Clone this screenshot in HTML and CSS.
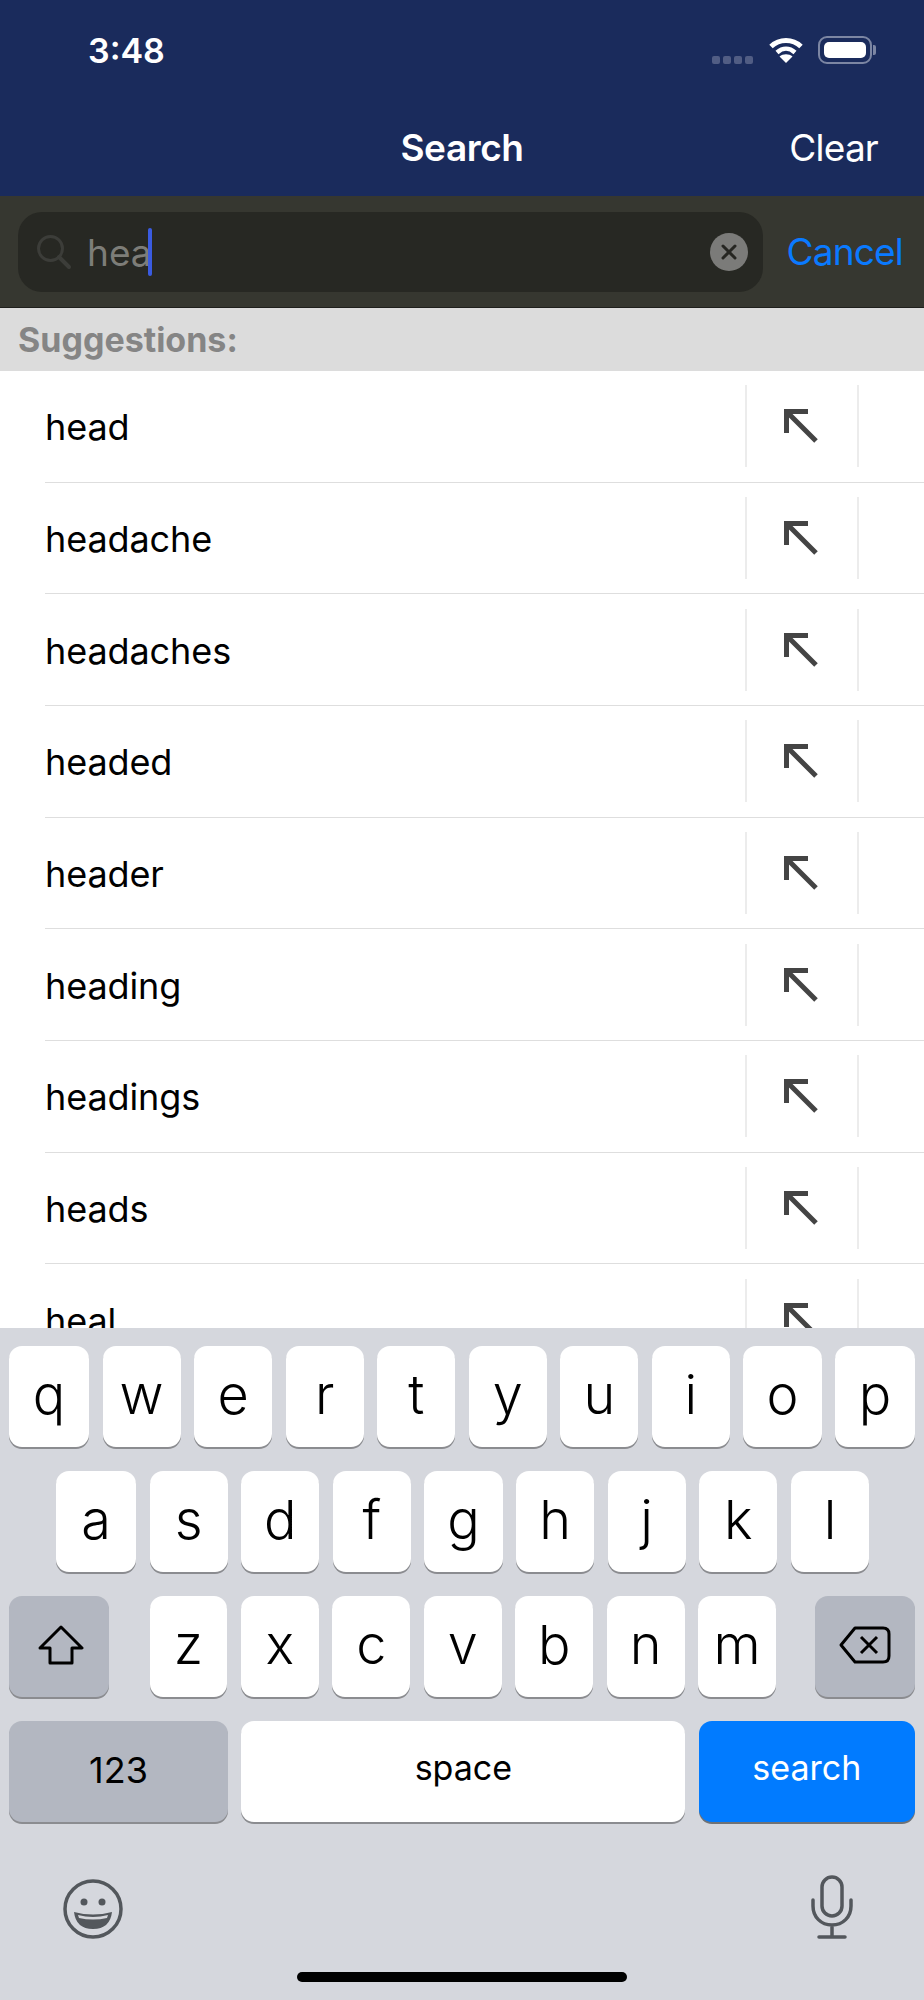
FILE: index.html
```html
<!DOCTYPE html>
<html lang="en">
<head>
  <meta charset="UTF-8" />
  <title>Search</title>
  <link rel="stylesheet" href="styles.css">
</head>
<body>
  <svg class="defs" width="0" height="0">
    <symbol id="fill-arrow" viewBox="0 0 34 34">
      <path d="M2.5 24V2.5H24M2.5 2.5L32 32" fill="none" stroke="#444" stroke-width="5"/>
    </symbol>
  </svg>

  <header class="top">
    <div class="status">
      <span class="time">3:48</span>
      <div class="status-icons">
        <div class="signal"><i></i><i></i><i></i><i></i></div>
        <svg class="wifi" width="36" height="26" viewBox="0 0 36 26">
          <path d="M3 9.500C11.500 1.500 24.500 1.500 33 9.500" fill="none" stroke="#fff" stroke-width="5"/>
          <path d="M9 15.500C14.500 10.500 21.500 10.500 27 15.500" fill="none" stroke="#fff" stroke-width="4.500"/>
          <path d="M18 26L11.500 19.500C15 16.500 21 16.500 24.500 19.500Z" fill="#fff"/>
        </svg>
        <div class="battery"><span class="battery-level"></span></div>
        <span class="battery-cap"></span>
      </div>
    </div>
    <nav class="nav">
      <span class="nav-title">Search</span>
      <span class="nav-clear">Clear</span>
    </nav>
  </header>

  <div class="search-bar">
    <div class="search-field">
      <svg class="search-icon" width="36" height="36" viewBox="0 0 36 36">
        <circle cx="14.500" cy="14.500" r="12" fill="none" stroke="#3c3d39" stroke-width="3"/>
        <path d="M23 23L33 33" stroke="#3c3d39" stroke-width="4" stroke-linecap="round"/>
      </svg>
      <span class="search-text">hea</span><span class="caret"></span>
      <svg class="search-clear" width="38" height="38" viewBox="0 0 38 38">
        <circle cx="19" cy="19" r="19" fill="#7b7b79"/>
        <path d="M13 13L25 25M25 13L13 25" stroke="#262622" stroke-width="3" stroke-linecap="round"/>
      </svg>
    </div>
    <span class="search-cancel">Cancel</span>
  </div>

  <div class="section-title">Suggestions:</div>

  <ul class="list">
    <li class="row"><span class="row-text">head</span><span class="row-action"><svg width="34" height="34"><use href="#fill-arrow"/></svg></span></li>
    <li class="row"><span class="row-text">headache</span><span class="row-action"><svg width="34" height="34"><use href="#fill-arrow"/></svg></span></li>
    <li class="row"><span class="row-text">headaches</span><span class="row-action"><svg width="34" height="34"><use href="#fill-arrow"/></svg></span></li>
    <li class="row"><span class="row-text">headed</span><span class="row-action"><svg width="34" height="34"><use href="#fill-arrow"/></svg></span></li>
    <li class="row"><span class="row-text">header</span><span class="row-action"><svg width="34" height="34"><use href="#fill-arrow"/></svg></span></li>
    <li class="row"><span class="row-text">heading</span><span class="row-action"><svg width="34" height="34"><use href="#fill-arrow"/></svg></span></li>
    <li class="row"><span class="row-text">headings</span><span class="row-action"><svg width="34" height="34"><use href="#fill-arrow"/></svg></span></li>
    <li class="row"><span class="row-text">heads</span><span class="row-action"><svg width="34" height="34"><use href="#fill-arrow"/></svg></span></li>
    <li class="row"><span class="row-text">heal</span><span class="row-action"><svg width="34" height="34"><use href="#fill-arrow"/></svg></span></li>
  </ul>

  <section class="keyboard">
    <div class="key-row key-row-top">
      <span class="key key-wide">q</span><span class="key">w</span><span class="key">e</span><span class="key">r</span><span class="key">t</span><span class="key">y</span><span class="key">u</span><span class="key">i</span><span class="key">o</span><span class="key key-wide">p</span>
    </div>
    <div class="key-row key-row-middle">
      <span class="key key-wide">a</span><span class="key">s</span><span class="key">d</span><span class="key">f</span><span class="key">g</span><span class="key">h</span><span class="key">j</span><span class="key">k</span><span class="key">l</span>
    </div>
    <div class="key-row">
      <span class="key key-fn key-shift">
        <svg width="46" height="40" viewBox="0 0 46 40">
          <path d="M23 2L44 23H34V38H12V23H2Z" fill="none" stroke="#000" stroke-width="3" stroke-linejoin="round"/>
        </svg>
      </span>
      <div class="key-group">
        <span class="key">z</span><span class="key">x</span><span class="key">c</span><span class="key">v</span><span class="key">b</span><span class="key">n</span><span class="key">m</span>
      </div>
      <span class="key key-fn key-delete">
        <svg width="52" height="38" viewBox="0 0 52 38">
          <path d="M16 2H44Q50 2 50 8V30Q50 36 44 36H16L2 19Z" fill="none" stroke="#000" stroke-width="3" stroke-linejoin="round"/>
          <path d="M22 11L38 27M38 11L22 27" stroke="#000" stroke-width="3"/>
        </svg>
      </span>
    </div>
    <div class="key-row key-row-bottom">
      <span class="key key-fn key-123">123</span>
      <span class="key key-space">space</span>
      <span class="key key-search">search</span>
    </div>
    <div class="key-extras">
      <svg class="emoji" width="60" height="60" viewBox="0 0 60 60">
        <circle cx="30" cy="30" r="28" fill="none" stroke="#53575c" stroke-width="3.500"/>
        <circle cx="21" cy="23" r="3.500" fill="#53575c"/>
        <circle cx="39" cy="23" r="3.500" fill="#53575c"/>
        <path d="M11 33Q30 38 49 33Q47 50 30 50Q13 50 11 33Z" fill="#53575c"/>
        <path d="M15 36Q30 40 45 36L44 39Q30 42 16 39Z" fill="#d6d7dc"/>
      </svg>
      <svg class="mic" width="42" height="64" viewBox="0 0 42 64">
        <rect x="11" y="2" width="20" height="39" rx="10" fill="none" stroke="#53575c" stroke-width="3.500"/>
        <path d="M2 25V31C2 42 10 50 21 50C32 50 40 42 40 31V25M21 50V61M8 62H34" fill="none" stroke="#53575c" stroke-width="3.500" stroke-linecap="round"/>
      </svg>
    </div>
    <div class="home-bar"></div>
  </section>
</body>
</html>
```

FILE: styles.css
```css
* {
  box-sizing: border-box;
}
body {
  margin: 0;
  width: 924px;
  height: 2000px;
  overflow: hidden;
  display: flex;
  flex-direction: column;
  font-family: Inter, "Noto Sans", sans-serif;
  background: #fff;
  color: #000;
}
.defs {
  position: absolute;
}

/* header */
.top {
  height: 196px;
  flex: none;
  background: #1a2b5c;
  color: #fff;
}
.status {
  height: 100px;
  padding: 0 48px 0 88px;
  display: flex;
  align-items: center;
  justify-content: space-between;
}
.time {
  font-size: 34px;
  font-weight: 600;
}
.status-icons {
  display: flex;
  align-items: center;
}
.signal {
  display: flex;
  gap: 3px;
  margin: 20px 15px 0 0;
}
.signal i {
  width: 8px;
  height: 8px;
  border-radius: 2px;
  background: #515d84;
}
.battery {
  width: 54px;
  height: 28px;
  margin-left: 14px;
  padding: 4px;
  border: 2px solid #7c86a3;
  border-radius: 9px;
}
.battery-level {
  display: block;
  height: 100%;
  background: #fff;
  border-radius: 5px;
}
.battery-cap {
  width: 3px;
  height: 10px;
  margin-left: 1px;
  background: #7c86a3;
  border-radius: 0 2px 2px 0;
}
.nav {
  position: relative;
  height: 96px;
  display: flex;
  align-items: center;
  justify-content: center;
  padding-bottom: 2px;
}
.nav-title {
  font-size: 37px;
  font-weight: 600;
  letter-spacing: -0.4px;
}
.nav-clear {
  position: absolute;
  right: 46px;
  font-size: 37px;
  letter-spacing: -0.8px;
}

/* search */
.search-bar {
  height: 112px;
  flex: none;
  background: #363730;
  border-bottom: 1px solid #1f1f1c;
  padding: 16px 21px 15px 18px;
  display: flex;
  align-items: center;
  justify-content: space-between;
}
.search-field {
  width: 745px;
  height: 80px;
  background: #272823;
  border-radius: 24px;
  padding: 0 15px 0 18px;
  display: flex;
  align-items: center;
}
.search-icon {
  flex: none;
  margin-right: 15px;
}
.search-text {
  font-size: 37px;
  color: #7d7d78;
}
.caret {
  width: 4px;
  height: 48px;
  margin-left: -4px;
  background: #3a5be0;
  border-radius: 2px;
}
.search-clear {
  margin-left: auto;
}
.search-cancel {
  font-size: 37px;
  letter-spacing: -0.8px;
  color: #0a7aff;
  padding-bottom: 2px;
}
.section-title {
  height: 63px;
  flex: none;
  padding: 0 18px;
  display: flex;
  align-items: center;
  background: #dcdcdc;
  color: #858585;
  font-size: 34px;
  font-weight: 700;
}

/* suggestions */
.list {
  flex: 1;
  min-height: 0;
  margin: 0;
  padding: 0;
  list-style: none;
  overflow: hidden;
}
.row {
  height: 111.67px;
  flex: none;
  margin-left: 45px;
  border-bottom: 1.500px solid #dedede;
  display: flex;
  align-items: center;
}
.row-text {
  flex: 1;
  padding-top: 2px;
  font-size: 36px;
  letter-spacing: -0.1px;
}
.row-action {
  width: 114px;
  height: 82px;
  margin-right: 65px;
  border-left: 2px solid #ececec;
  border-right: 2px solid #ececec;
  padding-right: 2px;
  display: flex;
  align-items: center;
  justify-content: center;
}

/* keyboard */
.keyboard {
  height: 672px;
  flex: none;
  position: relative;
  background: #d5d7dd;
  padding: 18px 9px 0;
  display: flex;
  flex-direction: column;
  gap: 24px;
}
.key-row {
  height: 101px;
  display: flex;
  gap: 13.500px;
}
.key-row-middle {
  padding: 0 46px 0 47px;
}
.key-row-bottom {
  gap: 13.400px;
}
.key {
  flex: 1;
  display: flex;
  align-items: center;
  justify-content: center;
  padding-bottom: 4px;
  background: #fff;
  border-radius: 13px;
  box-shadow: 0 2px 0 #8b8c90;
  font-size: 54px;
  font-weight: 300;
}
.key-wide {
  flex: none;
  width: 80px;
}
.key-fn {
  background: #b3b7c1;
}
.key-shift,
.key-delete {
  flex: none;
  width: 100px;
}
.key-shift svg {
  margin-left: 4px;
}
.key-group {
  flex: 1;
  display: flex;
  gap: 13.500px;
  margin: 0 25.500px 0 27px;
}
.key-123 {
  flex: none;
  width: 219px;
  font-size: 36px;
  font-weight: 400;
}
.key-space {
  flex: none;
  width: 444px;
  padding-bottom: 8px;
  font-size: 34px;
  font-weight: 400;
}
.key-search {
  flex: none;
  width: 216px;
  padding-bottom: 8px;
  background: #017bff;
  color: #fff;
  box-shadow: 0 2px 0 #6f7276;
  font-size: 34px;
  font-weight: 400;
}
.key-extras {
  display: flex;
  align-items: center;
  justify-content: space-between;
  padding: 29px 62px 0 54px;
}
.emoji {
  margin-top: 4px;
}
.home-bar {
  position: absolute;
  left: 297px;
  bottom: 18px;
  width: 330px;
  height: 10px;
  background: #000;
  border-radius: 5px;
}
```
